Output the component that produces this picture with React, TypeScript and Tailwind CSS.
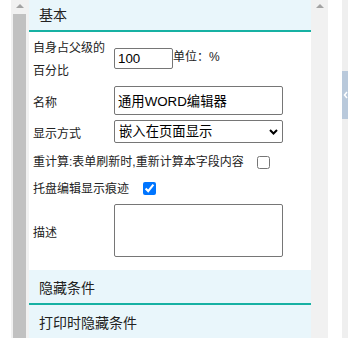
import React from "react";

const font = { fontFamily: '"Liberation Sans", "Noto Sans CJK SC", sans-serif' };

function Header({ title, first }: { title: string; first?: boolean }) {
  return (
    <div
      className={`flex h-[35px] shrink-0 items-center border-b-2 border-[#17b1a3] bg-[#e9f6fb] pl-[10px] pt-[4px] text-[14px] text-[#222] ${first ? "-mt-[3px]" : ""}`}
    >
      {title}
    </div>
  );
}

export default function App() {
  return (
    <div className="flex h-[338px] w-[348px] overflow-hidden bg-white" style={font}>
      <div className="w-[11px] shrink-0 bg-white" />
      {/* left scrollbar */}
      <div className="relative w-[18px] shrink-0 bg-[#f1f1f1]">
        <div className="absolute left-[5px] top-[4px] h-0 w-0 border-x-[4px] border-b-[4px] border-x-transparent border-b-[#a3a3a3]" />
        <div className="absolute bottom-0 left-[2px] top-[14px] w-[13px] bg-[#c1c1c1]" />
      </div>
      {/* panel */}
      <div className="flex w-[282px] shrink-0 flex-col bg-white">
        <Header title="基本" first />
        <div className="flex flex-col pl-[4px] pt-[2px] text-[12px] text-[#222]">
          <div className="flex h-[49px] items-center">
            <div className="w-[81px] shrink-0 pt-[2px] leading-[23px]">自身占父级的百分比</div>
            <input
              className="h-[21px] w-[59px] rounded-[2px] border border-[#767676] px-[3px] text-[13.333px] text-black outline-none"
              defaultValue="100"
            />
            <span className="mb-[3px] leading-[14px]">单位：%</span>
          </div>
          <div className="flex h-[35px] items-center">
            <div className="w-[81px] shrink-0 pt-[4px]">名称</div>
            <input
              className="h-[29px] w-[169px] rounded-[2px] border border-[#767676] px-[3px] text-[13.333px] text-black outline-none"
              defaultValue="通用WORD编辑器"
            />
          </div>
          <div className="flex h-[27px] items-center">
            <div className="w-[81px] shrink-0 pt-[4px]">显示方式</div>
            <div className="relative h-[23px] w-[169px]">
              <select className="h-[23px] w-[169px] appearance-none rounded-[2px] border border-[#767676] bg-white pl-[4px] text-[13.333px] text-black outline-none">
                <option>嵌入在页面显示</option>
              </select>
              <svg
                className="pointer-events-none absolute left-[155px] top-[9px]"
                width="9"
                height="6"
                viewBox="0 0 9 6"
              >
                <path d="M1 1 L4.5 4.5 L8 1" fill="none" stroke="#000" strokeWidth="2" />
              </svg>
            </div>
          </div>
          <div className="flex h-[32px] items-center pt-[2px]">
            <span>重计算:表单刷新时,重新计算本字段内容</span>
            <input type="checkbox" className="m-0 ml-[13px] h-[13px] w-[13px]" />
          </div>
          <div className="flex h-[21px] items-center pt-[2px]">
            <span>托盘编辑显示痕迹</span>
            <input type="checkbox" defaultChecked className="m-0 ml-[14px] h-[13px] w-[13px]" />
          </div>
          <div className="flex h-[65px] items-center">
            <div className="w-[81px] shrink-0 pt-[4px]">描述</div>
            <textarea className="h-[53px] w-[169px] resize-none rounded-[2px] border border-[#767676] outline-none" />
          </div>
          <div className="h-[7px]" />
        </div>
        <Header title="隐藏条件" />
        <Header title="打印时隐藏条件" />
      </div>
      {/* right scrollbar */}
      <div className="relative w-[17px] shrink-0 bg-[#f1f1f1]">
        <div className="absolute left-[5px] top-[4px] h-0 w-0 border-x-[4px] border-b-[4px] border-x-transparent border-b-[#a3a3a3]" />
      </div>
      <div className="w-[14px] shrink-0 bg-white" />
      <div className="relative w-[6px] shrink-0 bg-[#efefef]">
        <div className="absolute left-0 top-[71px] flex h-[48px] w-[6px] items-center justify-center bg-[#b9c9db]">
          <svg width="5" height="8" viewBox="0 0 5 8">
            <path d="M4 1 L1.5 4 L4 7" fill="none" stroke="#fff" strokeWidth="1.5" />
          </svg>
        </div>
      </div>
    </div>
  );
}
